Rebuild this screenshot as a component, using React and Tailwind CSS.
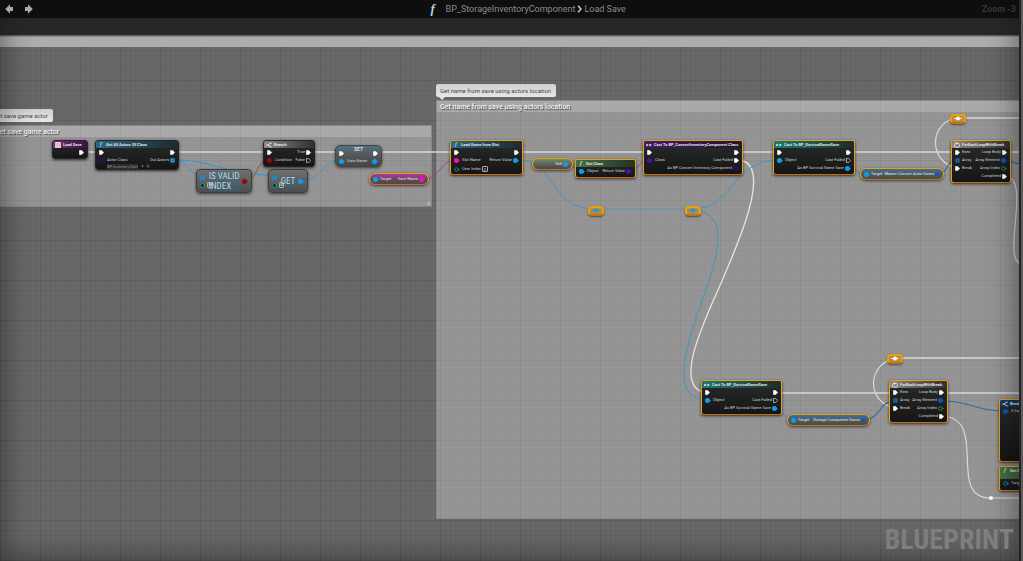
import { useState } from "react";

const ORANGE = "border-[#e9a00c] border-b-[#cc6c0a]";

const WIRES = [
  // exec
  { d: "M84 152H98 M175 152H267 M311 152H341 M380 152H455 M518 152H648 M739 152H777 M850 152H955 M1000 152H1400", c: "#d8d8d8", w: 1.4 },
  { d: "M958 118H1400 M894 358H1400 M777 393H893 M942 393H1400", c: "#d8d8d8", w: 1.4 },
  { d: "M954 118C929 126 929 161 956 168", c: "#d8d8d8", w: 1.2 },
  { d: "M892 359C867 367 867 401 894 408", c: "#d8d8d8", w: 1.2 },
  { d: "M739 160C773 164 740 240 718 290C700 330 674 388 706 393", c: "#e4e4e4", w: 1.3 },
  { d: "M1006 176C1032 180 1000 262 1022 264", c: "#d8d8d8", w: 1.2 },
  { d: "M942 416C990 418 945 498 991 498H1400", c: "#d8d8d8", w: 1.2 },
  // object
  { d: "M175 160C188 160 188 175 201 175 M175 160C215 160 225 175 273 175", c: "#2f9bd0", w: 1 },
  { d: "M303 180C322 180 322 160 341 160 M377 160C392 163 360 176 374 179", c: "#3c97c4", w: 1 },
  { d: "M516 160C560 160 545 209 596 209", c: "#3c97c4", w: 1 },
  { d: "M596 209H692", c: "#6b93a8", w: 1 },
  { d: "M692 209C735 209 730 160 779 160", c: "#3c97c4", w: 1 },
  { d: "M692 209C738 214 712 270 697 315C682 362 674 396 706 401", c: "#3c97c4", w: 1 },
  { d: "M567 164L581 171 M849 168C858 168 856 174 866 174 M775 409C784 409 782 419 792 419", c: "#3c97c4", w: 1 },
  // struct
  { d: "M938 174C948 174 946 160 957 160 M866 419C880 419 880 401 894 401", c: "#2c6da6", w: 1.2 },
  { d: "M942 401C972 401 974 411 1004 411 M1003 160C1012 160 1012 164 1022 164", c: "#2c6da6", w: 1.2 },
  { d: "M247 180C258 180 256 160 268 160", c: "#8d5a3c", w: 1 },
  { d: "M424 179C440 179 440 160 456 160", c: "#b83a9c", w: 1 },
  { d: "M629 171C639 171 639 160 648 160", c: "#7b4a9c", w: 1 },
];

const HEADS = {
  purple: "bg-linear-to-r from-[#8a1d96] to-[#35183a]",
  blue: "bg-linear-to-r from-[#2f6788] to-[#1b2a30]",
  gray: "bg-linear-to-r from-[#8b8b8b] to-[#303030]",
  green: "bg-linear-to-r from-[#487046] to-[#243224]",
  violet: "bg-linear-to-r from-[#42196a] to-[#22152c]",
  teal: "bg-linear-to-r from-[#147a78] to-[#1b2d2c]",
  struct: "bg-linear-to-r from-[#14395e] to-[#1b2733]",
};

const PILLS = {
  pink: "bg-linear-to-b from-[#a83898] via-[#6e4268] to-[#4a4a4a]",
  blue: "bg-linear-to-b from-[#3c6f98] via-[#4c5a64] to-[#4a4a4a]",
  green: "bg-linear-to-b from-[#6f8a68] via-[#5c645a] to-[#484848]",
};

const COLORS = {
  obj: "#109ee8",
  arr: "#1d8fcf",
  struct: "#0c55b8",
  sarr: "#1d5fa6",
  cls: "#4a0fa8",
  pink: "#f012c0",
  red: "#980a0a",
  int: "#1fa882",
};

// kind is "exec", "exec-open", or a color name with an optional "-open" suffix
function Pin({ kind }) {
  if (!kind) return null;
  const [name, open] = kind.split("-");
  if (name === "exec") {
    return (
      <svg viewBox="0 0 5 5" className="size-[5px] shrink-0">
        <path d="M.5 .4H2.6L4.7 2.5L2.6 4.6H.5Z" fill={open ? "none" : "#fff"} stroke="#fff" strokeWidth=".6" />
      </svg>
    );
  }
  const color = COLORS[name];
  if (name === "arr" || name === "sarr") {
    return (
      <svg viewBox="0 0 5 5" className="size-[5px] shrink-0">
        <rect x=".3" y=".3" width="4.4" height="4.4" fill={color} />
        <circle cx="2.5" cy="2.5" r=".4" fill="#123" />
      </svg>
    );
  }
  return (
    <svg viewBox="0 0 6 5" className="h-[5px] w-[6px] shrink-0">
      <circle cx="2.4" cy="2.5" r={open ? 1.7 : 2.2} fill={open ? "#101414" : color} stroke={color} strokeWidth=".8" />
      <path d="M4.5 1.3L5.9 2.5L4.5 3.7Z" fill={color} />
    </svg>
  );
}

function HeadIcon({ type }) {
  if (type === "event") {
    return (
      <svg viewBox="0 0 6 6" className="size-[6px]">
        <rect width="6" height="6" rx=".6" fill="#e2d6c2" />
        <path d="M0 2H6M0 4H6" stroke="#b89a84" strokeWidth=".5" />
      </svg>
    );
  }
  if (type === "fn") return <em className="w-[6px] text-center font-['Liberation_Serif',serif] text-[7px] leading-[7px] text-[#7fc4e8]">f</em>;
  if (type === "fn-green") return <em className="w-[6px] text-center font-['Liberation_Serif',serif] text-[7px] leading-[7px] text-[#a9dc9c]">f</em>;
  if (type === "cast") {
    return (
      <svg viewBox="0 0 6 6" className="size-[6px]">
        <path d="M.5 2L2.4 3L.5 4ZM3.6 2L5.5 3L3.6 4Z" fill="#eee" stroke="#eee" strokeWidth=".4" />
      </svg>
    );
  }
  if (type === "branch") {
    return (
      <svg viewBox="0 0 6 6" className="size-[6px]" fill="none" stroke="#fff" strokeWidth=".9">
        <path d="M.4 3H2C3 3 3 1.1 5.6 1.1M2 3C3 3 3 4.9 5.6 4.9" />
      </svg>
    );
  }
  return (
    <svg viewBox="0 0 6 6" className="size-[6px]" fill="none" stroke="#eee" strokeWidth=".8">
      <rect x=".6" y="1.4" width="4.8" height="3.8" rx="1" />
      <path d="M2 .3L3.4 1.4L2 2.5" />
    </svg>
  );
}

function Row({ row }) {
  const [inPin, inLabel, outLabel, outPin] = row;
  return (
    <div className="flex h-[8px] items-center px-[3px]">
      <Pin kind={inPin} />
      <span className="ml-[2px]">{inLabel}</span>
      <span className="mr-px ml-auto">{outLabel}</span>
      <Pin kind={outPin} />
    </div>
  );
}

function Node({ place, head, icon, title, rows = [], selected, children }) {
  return (
    <article className={`absolute overflow-hidden rounded-[3px] border bg-linear-to-b from-[#282c2a] to-[#151515] text-[4px] leading-[8px] whitespace-nowrap text-[#d0d0d0] shadow-[0_1px_3px_rgba(0,0,0,0.7)] ${selected ? ORANGE : "border-[#262626]"} ${place}`}>
      <header className={`flex h-[7px] items-center gap-[2px] px-[2px] font-bold text-[#e2e2e2] ${HEADS[head]}`}>
        <HeadIcon type={icon} />
        {title}
      </header>
      <div className="pb-[2px]">
        {rows.map((row, i) => <Row key={i} row={row} />)}
      </div>
      {children}
    </article>
  );
}

function Pill({ place, tone, inLabel, outLabel, outPin }) {
  return (
    <article className={`absolute flex h-[12px] items-center rounded-full border px-[3px] text-[4px] leading-[8px] whitespace-nowrap text-[#e8e8e8] shadow-[0_1px_3px_rgba(0,0,0,0.6)] ${ORANGE} ${PILLS[tone]} ${place}`}>
      {inLabel && <Pin kind="obj" />}
      <span className="ml-px">{inLabel}</span>
      <span className="mr-px ml-auto">{outLabel}</span>
      <Pin kind={outPin} />
    </article>
  );
}

function Reroute({ place, color }) {
  return (
    <div className={`absolute flex h-[10px] w-[16px] justify-center rounded-[4px] border-2 bg-[#b08c48] shadow-[0_1px_2px_rgba(0,0,0,0.5)] ${ORANGE} ${place}`}>
      <svg viewBox="0 0 8 5" className="h-[5px] w-[8px]">
        <path d="M0 2.5H8" stroke={color} strokeWidth=".8" />
        <circle cx="4" cy="2.5" r="2" fill={color} />
      </svg>
    </div>
  );
}

function CompactNode({ place, label, outPin, index, children }) {
  return (
    <article className={`absolute flex h-[24px] items-center rounded-[4px] border border-[#3c3c3c] bg-linear-to-b from-[#707070] to-[#4b4e50] px-[3px] shadow-[0_1px_3px_rgba(0,0,0,0.6)] ${place}`}>
      <div className="flex flex-col gap-[3px]">
        <Pin kind="arr" />
        <Pin kind="int-open" />
      </div>
      <h3 className="flex-1 text-center font-['Roboto_Condensed',Roboto,sans-serif] text-[9px] leading-[10px] text-[#c8d0d4]">
        <span className="inline-block bg-[#2a6f94]/40 text-left">{children}</span>
      </h3>
      <input aria-label={label} defaultValue={index} className="absolute bottom-[4px] left-[10px] h-[6px] w-[5px] rounded-[1px] border border-[#b0b0b0] text-center text-[4px] text-white" />
      <Pin kind={outPin} />
    </article>
  );
}

function Comment({ place, title }) {
  return (
    <section className={`absolute border border-[#888] bg-white/30 ${place}`}>
      <h2 className="h-[11px] bg-white/20 px-[3px] text-[7px] leading-[12px] font-medium whitespace-nowrap text-[#f4f4f4] [text-shadow:1px_1px_1px_rgba(0,0,0,0.6)]">{title}</h2>
      <svg viewBox="0 0 4 4" className="absolute right-px bottom-px size-[4px]"><path d="M4 0V4H0Z" fill="#b4b4b4" /></svg>
    </section>
  );
}

function Bubble({ place, children }) {
  return (
    <div className={`absolute rounded-[2px] bg-linear-to-b from-[#cfcfcf] to-[#e6e6e6] px-[4px] text-[6px] leading-[13px] whitespace-nowrap text-[#484848] ${place}`}>
      {children}
      <svg viewBox="0 0 6 3" className="absolute top-full left-[3px] h-[3px] w-[6px]"><path d="M0 0H6L3 3Z" fill="#e2e2e2" /></svg>
    </div>
  );
}

const CAST_ROWS = [
  ["exec", "", "", "exec"],
  ["obj", "Object", "Cast Failed", "exec-open"],
  ["", "", "As BP Survival Game Save", "obj"],
];

const LOOP_ROWS = [
  ["exec", "Exec", "Loop Body", "exec"],
  ["sarr", "Array", "Array Element", "struct"],
  ["exec", "Break", "Array Index", "int-open"],
  ["", "", "Completed", "exec"],
];

function Graph() {
  const [slot, setSlot] = useState("0");

  return (
    <>
      <div className="absolute inset-x-0 top-[36px] h-[11px] border-t border-[#8a8a8a] bg-[#adadad]" />
      <Comment place="top-[125px] left-[-9px] h-[82px] w-[441px]" title="Get save game actor" />
      <Comment place="top-[100px] left-[436px] -right-2 h-[419px]" title="Get name from save using actors location" />
      <Bubble place="top-[109px] left-[-11px] w-[64px]">Get save game actor</Bubble>
      <Bubble place="top-[84px] left-[436px] w-[120px]">Get name from save using actors location</Bubble>

      <svg className="absolute inset-0 size-full" fill="none">
        {WIRES.map((wire) => <path key={wire.d} d={wire.d} stroke={wire.c} strokeWidth={wire.w} />)}
        <circle cx="991" cy="498" r="2" fill="#fff" />
      </svg>

      <Node place="top-[140px] left-[52px] w-[36px]" head="purple" icon="event" title="Load Save" rows={[["", "", "", "exec"]]} />
      <Node place="top-[140px] left-[95px] w-[84px]" head="blue" icon="fn" title="Get All Actors Of Class" rows={[["exec", "", "", "exec"], ["cls-open", "Actor Class", "Out Actors", "arr"]]}>
        <div className="-mt-[3px] flex h-[6px] items-center gap-[3px] pl-[11px] text-[#8c8c8c]">
          <select aria-label="Actor Class" className="h-[5px] w-[31px] appearance-none bg-[#2e2e2e] text-[4px] leading-[5px]">
            <option>BP Inventory Game</option>
          </select>
          <svg viewBox="0 0 9 4" className="h-[4px] w-[9px]" fill="none" stroke="#666" strokeWidth=".8">
            <path d="M0 2H3M1.5 .5V3.5" />
            <circle cx="7" cy="2" r="1.3" />
          </svg>
        </div>
      </Node>
      <Node place="top-[140px] left-[263px] w-[52px]" head="gray" icon="branch" title="Branch" rows={[["exec", "", "True", "exec"], ["red", "Condition", "False", "exec-open"]]} />
      <CompactNode place="top-[169px] left-[196px] w-[56px]" label="Index to test" outPin="red" index="0">IS VALID<br />INDEX</CompactNode>
      <CompactNode place="top-[169px] left-[268px] w-[40px]" label="Index" outPin="obj" index="0">GET</CompactNode>
      <article className="absolute top-[145px] left-[335px] w-[47px] rounded-[5px] border border-[#454545] bg-linear-to-b from-[#4e7288] via-[#565a5c] via-40% to-[#464646] pb-px text-[4px] leading-[8px] text-[#dcdcdc] shadow-[0_1px_3px_rgba(0,0,0,0.6)]">
        <h3 className="-mb-[4px] text-center text-[5px] leading-[7px] font-bold">SET</h3>
        <Row row={["exec", "", "", "exec"]} />
        <Row row={["obj", "Save Game", "", "obj"]} />
      </article>
      <Pill place="top-[173px] left-[369px] w-[60px]" tone="pink" inLabel="Target" outLabel="Save Name" outPin="pink" />

      <Node selected place="top-[140px] left-[450px] w-[73px]" head="blue" icon="fn" title="Load Game from Slot" rows={[["exec", "", "", "exec"], ["pink", "Slot Name", "Return Value", "obj"]]}>
        <label className="-mt-[2px] flex h-[10px] items-center gap-[2px] px-[3px]">
          <Pin kind="int-open" />
          User Index
          <input value={slot} onChange={(e) => setSlot(e.target.value)} className="-ml-px h-[6px] w-[6px] rounded-[1px] border border-[#aaa] text-center text-[4px] leading-[4px]" />
        </label>
      </Node>
      <Pill place="top-[158px] left-[532px] w-[41px]" tone="green" outLabel="Self" outPin="obj" />
      <Node selected place="top-[159px] left-[575px] w-[61px]" head="green" icon="fn-green" title="Get Class" rows={[["obj", "Object", "Return Value", "cls"]]} />
      <Reroute place="top-[206px] left-[588px]" color="#109ee8" />
      <Reroute place="top-[206px] left-[685px]" color="#109ee8" />
      <Node
        selected
        place="top-[140px] left-[643px] w-[100px]"
        head="violet"
        icon="cast"
        title="Cast To BP_ConvertInventoryComponent Class"
        rows={[["exec", "", "", "exec"], ["cls", "Class", "Cast Failed", "exec"], ["", "", "As BP Convert Inventory Component", "cls-open"]]}
      />
      <Node selected place="top-[140px] left-[773px] w-[82px]" head="teal" icon="cast" title="Cast To BP_SurvivalGameSave" rows={CAST_ROWS} />
      <Pill place="top-[168px] left-[860px] w-[84px]" tone="blue" inLabel="Target" outLabel="Master Convert Actor Saves" outPin="sarr" />
      <Reroute place="top-[114px] left-[950px]" color="#fff" />
      <Node selected place="top-[140px] left-[951px] w-[60px]" head="gray" icon="loop" title="ForEachLoopWithBreak" rows={LOOP_ROWS} />

      <Node selected place="top-[380px] left-[701px] w-[81px]" head="teal" icon="cast" title="Cast To BP_SurvivalGameSave" rows={CAST_ROWS} />
      <Pill place="top-[414px] left-[787px] w-[83px]" tone="blue" inLabel="Target" outLabel="Storage Component Saves" outPin="sarr" />
      <Reroute place="top-[354px] left-[887px]" color="#fff" />
      <Node selected place="top-[380px] left-[889px] w-[59px]" head="gray" icon="loop" title="ForEachLoopWithBreak" rows={LOOP_ROWS} />
      <Node selected place="top-[399px] left-[999px] h-[63px] w-[80px]" head="struct" icon="branch" title="Break S Save" rows={[["struct", "S Save", "", ""]]} />
      <Node selected place="top-[466px] left-[999px] h-[25px] w-[80px]" head="green" icon="fn-green" title="Get Class">
        <div className="-mt-[2px] h-[5px] bg-linear-to-r from-[#487046] to-[#243224]" />
        <Row row={["obj-open", "Target", "", ""]} />
      </Node>
    </>
  );
}

function Arrow({ flip }) {
  return (
    <svg viewBox="0 0 9 10" className={flip ? "h-[10px] w-[9px] -scale-x-100" : "h-[10px] w-[9px]"}>
      <path d="M.2 5L5 .2V3H8V7H5V9.8Z" fill="#a8a8a8" />
    </svg>
  );
}

export default function App() {
  return (
    <div className="flex min-h-screen bg-[#5a5a5a] font-['Roboto',sans-serif]">
      <main className="relative flex flex-1 flex-col overflow-hidden bg-[#686868]">
        <div className="absolute inset-0 bg-[repeating-linear-gradient(0deg,rgba(0,0,0,0.04)_0_1px,transparent_1px_5px),repeating-linear-gradient(90deg,rgba(0,0,0,0.04)_0_1px,transparent_1px_5px),repeating-linear-gradient(0deg,rgba(0,0,0,0.06)_0_1px,transparent_1px_40px),repeating-linear-gradient(90deg,rgba(0,0,0,0.06)_0_1px,transparent_1px_40px)]" />
        <Graph />
        <div className="pointer-events-none absolute inset-0 shadow-[inset_0_0_32px_rgba(0,0,0,0.5)]" />

        <header className="relative flex h-[18px] items-center bg-[#0e0e0e] text-[9px] leading-[18px] text-[#8c8c8c]">
          <nav className="flex w-5/12 gap-[10px] pl-[5px]">
            <button aria-label="Back"><Arrow /></button>
            <button aria-label="Forward"><Arrow flip /></button>
          </nav>
          <em className="w-[21px] pl-[6px] font-['Liberation_Serif',serif] text-[13px] font-bold text-[#b8d0dc]">f</em>
          <a href="#component">BP_StorageInventoryComponent</a>
          <svg viewBox="0 0 5 8" className="mx-[2px] h-[8px] w-[5px]" fill="none" stroke="#ccc" strokeWidth="1.5"><path d="M1 .8L4 4L1 7.2" /></svg>
          <a href="#load-save">Load Save</a>
          <span className="mr-[3px] ml-auto font-bold text-[#363636]">Zoom -3</span>
        </header>
        <div className="relative h-[17px] bg-[#131313]/75" />
        <p className="pointer-events-none relative mt-auto pr-[5px] pb-[5px] text-right font-['Roboto_Condensed',Roboto,sans-serif] text-[28px] leading-[32px] font-bold text-[#7e7e7e]">BLUEPRINT</p>
      </main>
      <aside className="w-[4px] border-l-2 border-[#242424] bg-[#5c5c5c]" />
    </div>
  );
}
